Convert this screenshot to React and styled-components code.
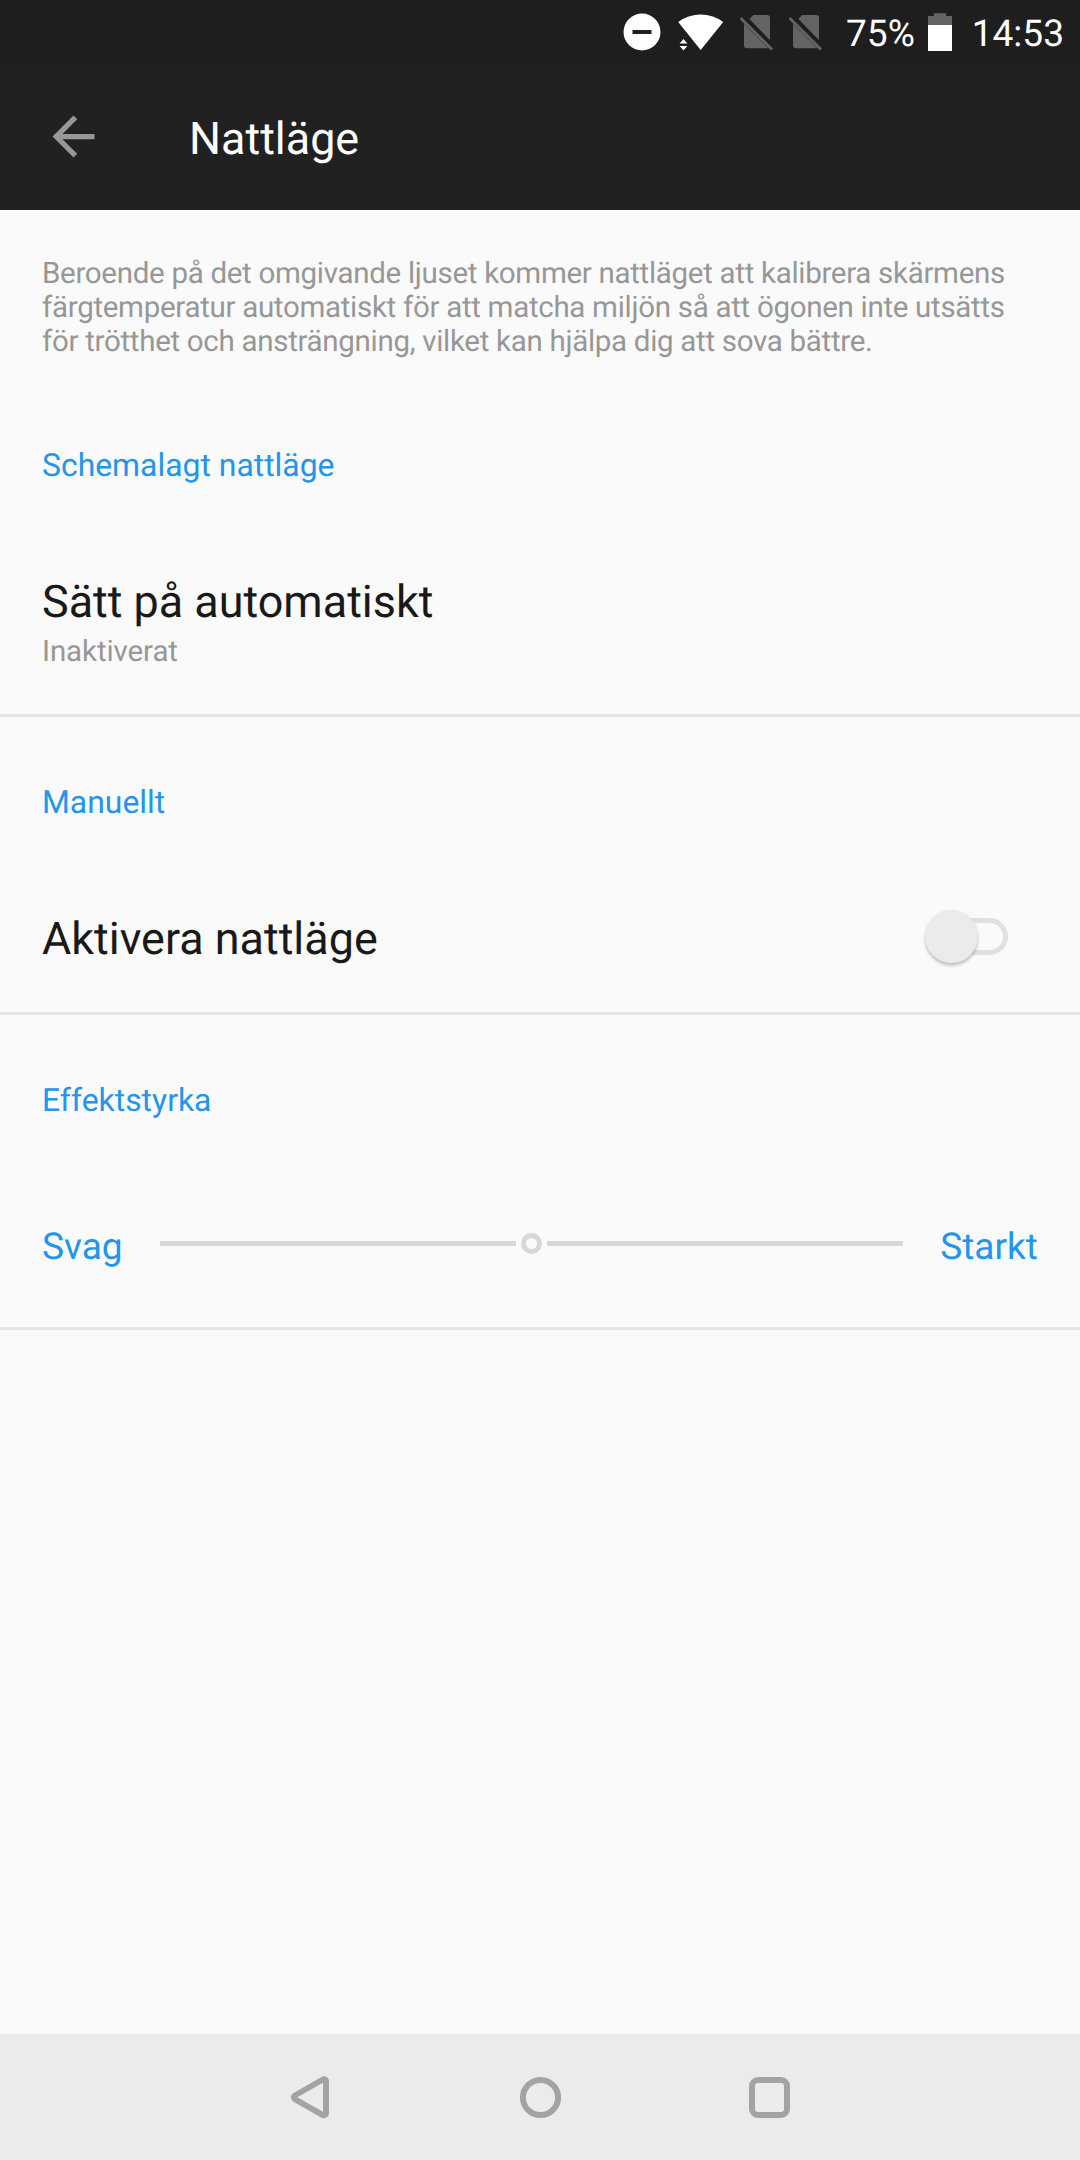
import React, { useState } from 'react';
import styled, { createGlobalStyle } from 'styled-components';

const SimOff = () => (
  <svg width="36" height="38" viewBox="0 0 36 38">
    <path d="M11.4 4.9 15.3 1H29a3 3 0 0 1 3 3v22.2zM6 9.8 30.4 34.2H9a3 3 0 0 1-3-3z" fill="#646464" />
    <path d="M2.6 3.9 34 35.6" stroke="#646464" strokeWidth="2.8" />
  </svg>
);

const App = () => {
  const [enabled, setEnabled] = useState(false);

  return (
    <Screen>
      <GlobalStyle />
      <StatusBar>
        <DndIcon width="38" height="38" viewBox="0 0 38 38">
          <circle cx="19" cy="19" r="18.5" fill="#fff" />
          <path d="M9.5 19h19" stroke="#1f1f1f" strokeWidth="4" />
        </DndIcon>
        <WifiIcon width="46" height="38" viewBox="0 0 46 38">
          <path d="M.2 9.1a37.5 37.5 0 0 1 45 0L22.7 37z" fill="#fff" />
          <path d="M1.6 30.6 5.5 26l3.9 4.6zM1.6 33h7.8l-3.9 4.4z" fill="#fff" />
        </WifiIcon>
        <SimIcons>
          <SimOff />
          <SimOff />
        </SimIcons>
        <Percent>75%</Percent>
        <BatteryIcon width="24" height="38" viewBox="0 0 24 38">
          <path d="M6 .3h12V3h6v9H0V3h6z" fill="#646464" />
          <path d="M0 12h24v26H0z" fill="#fff" />
        </BatteryIcon>
        <Clock>14:53</Clock>
      </StatusBar>

      <AppBar>
        <BackButton>
          <svg width="63" height="63" viewBox="0 0 24 24">
            <path d="M20 11H7.83l5.59-5.59L12 4l-8 8 8 8 1.41-1.41L7.83 13H20v-2z" fill="#979797" />
          </svg>
        </BackButton>
        <Title>Nattläge</Title>
      </AppBar>

      <Content>
        <Description>
          Beroende på det omgivande ljuset kommer nattläget att kalibrera skärmens<br />
          färgtemperatur automatiskt för att matcha miljön så att ögonen inte utsätts<br />
          för trötthet och ansträngning, vilket kan hjälpa dig att sova bättre.
        </Description>

        <Section $top={87} $bottom={44}>
          <SectionTitle>Schemalagt nattläge</SectionTitle>
          <Row>
            <div>
              <Label>Sätt på automatiskt</Label>
              <Summary>Inaktiverat</Summary>
            </div>
          </Row>
        </Section>

        <Section $top={66} $bottom={47}>
          <SectionTitle>Manuellt</SectionTitle>
          <Row>
            <Label>Aktivera nattläge</Label>
            <Switch role="switch" aria-checked={enabled} onClick={() => setEnabled(!enabled)}>
              <Track />
              <Thumb $on={enabled} />
            </Switch>
          </Row>
        </Section>

        <Section $top={66} $bottom={57}>
          <SectionTitle>Effektstyrka</SectionTitle>
          <SliderRow>
            <SliderLabel>Svag</SliderLabel>
            <Slider>
              <Line />
              <Knob />
              <Line />
            </Slider>
            <SliderLabel>Starkt</SliderLabel>
          </SliderRow>
        </Section>
      </Content>

      <NavBar>
        <svg width="42" height="44" viewBox="0 0 42 44">
          <path d="M6 22.3 34 6.3v32z" fill="#a3a3a3" stroke="#a3a3a3" strokeWidth="10" strokeLinejoin="round" />
          <path d="M7.3 22.3 33 7.8v29z" fill="#ebebeb" />
        </svg>
        <svg width="42" height="44" viewBox="0 0 42 44">
          <circle cx="21.5" cy="22.5" r="17.6" fill="none" stroke="#a3a3a3" strokeWidth="6" />
        </svg>
        <svg width="42" height="44" viewBox="0 0 42 44">
          <rect x="4" y="5" width="35" height="35" rx="6" fill="none" stroke="#a3a3a3" strokeWidth="6" />
        </svg>
      </NavBar>
    </Screen>
  );
};

export default App;

const GlobalStyle = createGlobalStyle`
  body {
    margin: 0;
    background: #fafafa;
    font-family: Roboto, sans-serif;
    text-rendering: geometricPrecision;
  }
  svg {
    display: block;
    flex-shrink: 0;
  }
`

const Screen = styled.div`
  width: 1080px;
  height: 2160px;
  display: flex;
  flex-direction: column;
  overflow: hidden;
  background: #fafafa;
`

const StatusBar = styled.div`
  height: 63px;
  box-sizing: border-box;
  padding: 0 16px 0 623px;
  display: flex;
  align-items: center;
  background: #1e1e1e;
  color: #fff;
  font-size: 37.1px;
  line-height: 44px;
  white-space: nowrap;
`

const DndIcon = styled.svg`
  margin-right: 17px;
`

const WifiIcon = styled.svg`
  margin-right: 14px;
`

const SimIcons = styled.div`
  display: flex;
  gap: 13px;
  padding-top: 2px;
`

const Percent = styled.span`
  width: 69px;
  margin-left: 23px;
  padding-top: 6px;
`

const BatteryIcon = styled.svg`
  margin-left: 13px;
`

const Clock = styled.span`
  margin-left: auto;
  padding-top: 6px;
`

const AppBar = styled.header`
  height: 147px;
  display: flex;
  align-items: center;
  background: #212121;
`

const BackButton = styled.button`
  margin: 0 84px 0 42px;
  padding: 0;
  border: 0;
  background: none;
`

const Title = styled.h1`
  margin: 0;
  padding-top: 5px;
  color: #fff;
  font-size: 44.9px;
  font-weight: 400;
  line-height: 52px;
`

const Content = styled.main`
  flex: 1;
`

const Description = styled.p`
  margin: 0;
  padding: 47px 0 0 42px;
  color: #979797;
  font-size: 29.5px;
  letter-spacing: -0.3px;
  line-height: 34px;
  white-space: nowrap;
`

const Section = styled.section`
  padding: ${props => props.$top}px 42px ${props => props.$bottom}px;
  border-bottom: 3px solid #e5e5e5;
`

const SectionTitle = styled.h2`
  margin: 0 0 92px;
  color: #2395ea;
  font-size: 31.9px;
  font-weight: 400;
  line-height: 38px;
`

const Row = styled.div`
  display: flex;
  justify-content: space-between;
`

const Label = styled.div`
  color: #191919;
  font-size: 44.9px;
  line-height: 52px;
`

const Summary = styled.div`
  margin-top: 6px;
  color: #979797;
  font-size: 29.5px;
  letter-spacing: -0.1px;
  line-height: 36px;
`

const Switch = styled.button`
  position: relative;
  width: 83px;
  height: 53px;
  margin: -3px 30px 0 0;
  padding: 8px 0 0 10px;
  border: 0;
  background: none;
`

const Track = styled.div`
  box-sizing: border-box;
  height: 37px;
  margin-bottom: 8px;
  border: 5px solid #e0e0e0;
  border-radius: 19px;
`

const Thumb = styled.div`
  position: absolute;
  top: 0;
  left: ${props => (props.$on ? 30 : 0)}px;
  width: 53px;
  height: 53px;
  border-radius: 50%;
  background: #ebebeb;
  box-shadow: 0 3px 3px rgba(0, 0, 0, 0.2), 0 0 2px rgba(0, 0, 0, 0.08);
`

const SliderRow = styled.div`
  display: flex;
  margin-top: 105px;
`

const SliderLabel = styled.span`
  padding-top: 2px;
  color: #2395ea;
  font-size: 37.1px;
  line-height: 44px;

  &:first-child {
    width: 118px;
  }
  &:last-child {
    margin-left: auto;
  }
`

const Slider = styled.div`
  width: 743px;
  height: 39px;
  display: flex;
  align-items: center;
  gap: 5px;
`

const Line = styled.div`
  flex: 1;
  height: 5px;
  background: #d7d7d7;
`

const Knob = styled.div`
  box-sizing: border-box;
  width: 21px;
  height: 21px;
  border: 5px solid #d7d7d7;
  border-radius: 50%;
`

const NavBar = styled.nav`
  height: 126px;
  display: flex;
  align-items: center;
  justify-content: center;
  gap: 187px;
  background: #ebebeb;
`
